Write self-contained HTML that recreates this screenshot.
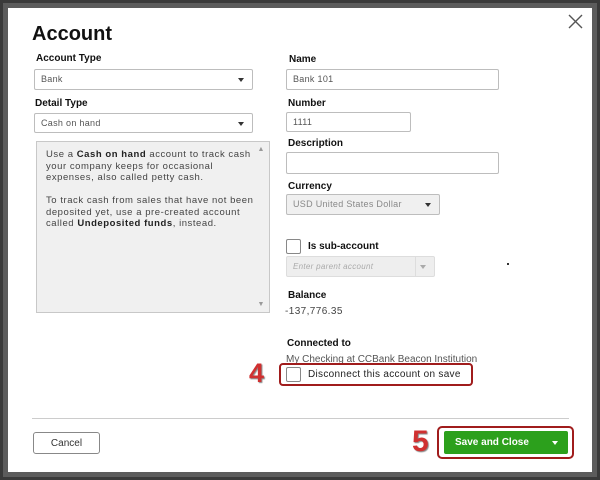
<!DOCTYPE html>
<html><head><style>
*{margin:0;padding:0;box-sizing:border-box}
body{width:600px;height:480px;background:#5c5c5c;position:relative;overflow:hidden;font-family:"Liberation Sans",sans-serif;color:#222}
.frame{position:absolute;left:0;top:0;width:600px;height:480px;border:3px solid #3a3a3a}
.dlg{position:absolute;left:8px;top:8px;width:584px;height:464px;background:#fff}
.a{position:absolute}
.lbl{position:absolute;font-size:10px;font-weight:bold;color:#111}
.in{position:absolute;border:1px solid #bdbdbd;background:#fff;font-size:9px;color:#555;padding:0 0 0 6px;line-height:18px;border-radius:2px;letter-spacing:0.3px}
.car{position:absolute;right:8px;top:8px;width:0;height:0;border-left:3.5px solid transparent;border-right:3.5px solid transparent;border-top:4px solid #333}
.desc{position:absolute;left:36px;top:141px;width:234px;height:172px;background:#f0f0f0;border:1px solid #c8c8c8;font-size:9.5px;color:#444;line-height:11.5px;padding:7px 14px 0 9px;letter-spacing:0.55px}
.desc b{color:#222}
.cb{position:absolute;width:15px;height:15px;border:1px solid #888;background:#fff;border-radius:2px}
</style></head><body>
<div class="frame"></div>
<div class="dlg"></div>
<div class="a" style="left:32px;top:23px;font-size:20px;font-weight:bold;color:#111">Account</div>
<svg class="a" style="left:568px;top:14px" width="15" height="15"><path d="M1 1L14 14M14 1L1 14" stroke="#555" stroke-width="1.4"/></svg>

<div class="lbl" style="left:36px;top:53px">Account Type</div>
<div class="in" style="left:34px;top:69px;width:219px;height:21px;line-height:19px">Bank<span class="car"></span></div>
<div class="lbl" style="left:35px;top:98px">Detail Type</div>
<div class="in" style="left:34px;top:113px;width:219px;height:20px;line-height:18px">Cash on hand<span class="car"></span></div>
<div class="desc">Use a <b>Cash on hand</b> account to track cash your company keeps for occasional expenses, also called petty cash.<br><br>To track cash from sales that have not been deposited yet, use a pre-created account called <b>Undeposited funds</b>, instead.
<span class="a" style="right:4px;top:2px;font-size:7px;color:#999">&#9650;</span>
<span class="a" style="right:4px;bottom:2px;font-size:7px;color:#999">&#9660;</span></div>

<div class="lbl" style="left:289px;top:54px">Name</div>
<div class="in" style="left:286px;top:69px;width:213px;height:21px;line-height:19px">Bank 101</div>
<div class="lbl" style="left:288px;top:98px">Number</div>
<div class="in" style="left:286px;top:112px;width:125px;height:20px;line-height:18px">1111</div>
<div class="lbl" style="left:288px;top:138px">Description</div>
<div class="in" style="left:286px;top:152px;width:213px;height:22px"></div>
<div class="lbl" style="left:288px;top:181px">Currency</div>
<div class="in" style="left:286px;top:194px;width:154px;height:21px;line-height:19px;background:#f0f0f0;color:#888">USD United States Dollar<span class="car"></span></div>
<div class="cb" style="left:286px;top:239px"></div>
<div class="lbl" style="left:308px;top:241px">Is sub-account</div>
<div class="in" style="left:286px;top:256px;width:149px;height:21px;line-height:19px;background:#eee;color:#aaa;font-style:italic;font-size:8px;border-color:#ddd">Enter parent account<span class="a" style="left:128px;top:0;width:1px;height:19px;background:#ddd"></span><span class="car" style="border-top-color:#aaa"></span></div>
<div class="a" style="left:507px;top:263px;width:2px;height:2px;background:#333"></div>
<div class="lbl" style="left:288px;top:290px">Balance</div>
<div class="a" style="left:285px;top:306px;font-size:10px;color:#444;letter-spacing:0.4px">-137,776.35</div>
<div class="lbl" style="left:287px;top:338px">Connected to</div>
<div class="a" style="left:286px;top:354px;font-size:10px;color:#555;height:9px;overflow:hidden">My Checking at CCBank Beacon Institution</div>
<div class="a" style="left:279px;top:363px;width:194px;height:23px;border:2.5px solid #a01c1c;border-radius:4px;background:#fff"></div>
<div class="cb" style="left:286px;top:367px"></div>
<div class="a" style="left:308px;top:369px;font-size:10px;color:#222;letter-spacing:0.3px">Disconnect this account on save</div>
<div class="a" style="left:249px;top:358px;font-size:27px;font-weight:bold;color:#d03030;text-shadow:1px 1px 1px #888">4</div>

<div class="a" style="left:32px;top:418px;width:537px;height:1px;background:#ccc"></div>
<div class="a" style="left:33px;top:432px;width:67px;height:22px;border:1px solid #888;border-radius:3px;font-size:10px;text-align:center;line-height:21px;color:#333">Cancel</div>
<div class="a" style="left:412px;top:425px;font-size:30px;font-weight:bold;color:#d03030;text-shadow:1px 1px 1px #888">5</div>
<div class="a" style="left:437px;top:426px;width:137px;height:33px;border:2.5px solid #a01c1c;border-radius:5px"></div>
<div class="a" style="left:444px;top:431px;width:124px;height:23px;background:#2ca01c;border-radius:2px;color:#fff;font-size:10px;font-weight:bold;line-height:24px;padding-left:11px">Save and Close<span class="car" style="border-top-color:#fff;top:10px;right:10px"></span></div>
</body></html>
